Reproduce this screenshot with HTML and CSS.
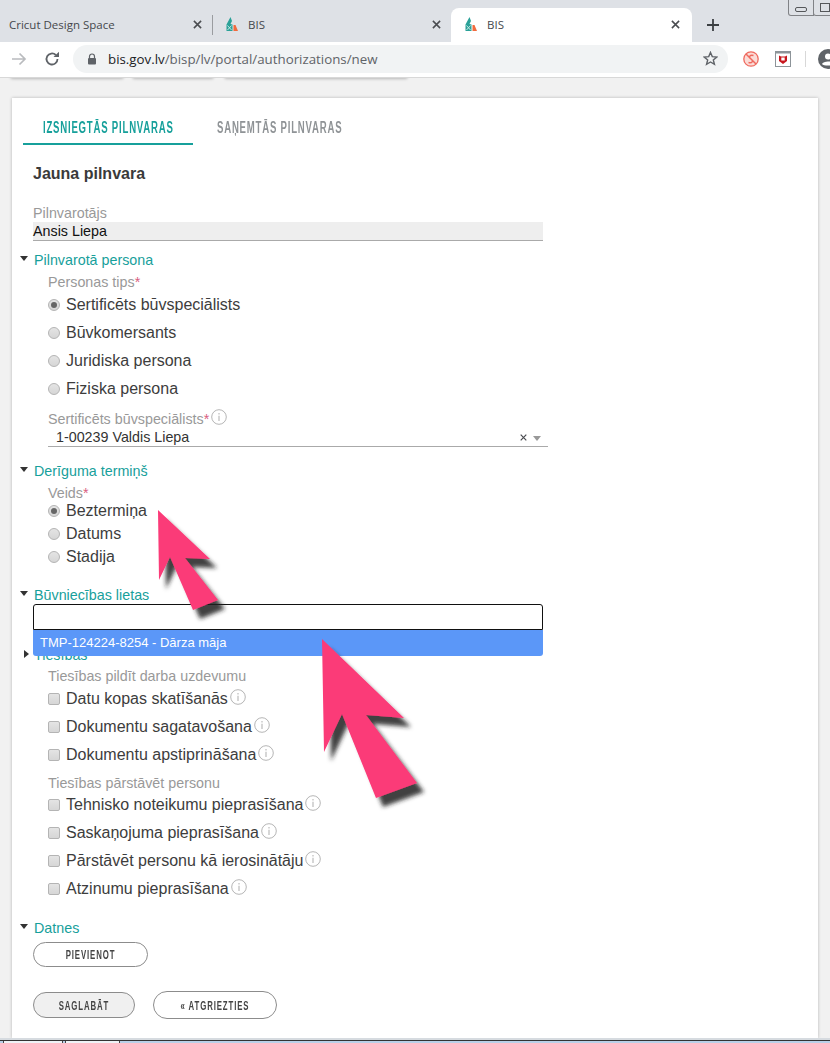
FILE: index.html

```html
<!DOCTYPE html>
<html lang="lv">
<head>
  <meta charset="UTF-8" />
  <title>BIS</title>
  <link rel="stylesheet" href="styles.css">
</head>
<body>
  <svg class="defs" width="0" height="0">
    <symbol id="favicon" viewBox="0 0 12 16">
      <path d="M4.500 1 L6 5 L4.500 8 L6.500 8.500 L6.500 15 L0.500 15 L0.500 8.500 Z" fill="#2aa198"/>
      <path d="M7.500 9 L9.500 9 L12 15 L7.500 15 Z" fill="#f26a3d"/>
      <path d="M1.500 14 L5.500 9.500 M1.500 9.500 L5.500 14" stroke="#d5efec" stroke-width="0.900"/>
    </symbol>
    <symbol id="close" viewBox="0 0 10 10">
      <path d="M1 1 L9 9 M9 1 L1 9" stroke="#4a4c50" stroke-width="1.700"/>
    </symbol>
    <symbol id="info" viewBox="0 0 16 16">
      <circle cx="8" cy="8" r="7.300" fill="#fff" stroke="#b5b5b5"/>
      <path d="M8 4 V5.400 M8 6.800 V12" stroke="#b5b5b5" stroke-width="1.100"/>
    </symbol>
  </svg>

  <div class="tabstrip">
    <div class="tab tab-first">
      <span class="tab-title">Cricut Design Space</span>
      <svg class="tab-close"><use href="#close"/></svg>
    </div>
    <div class="tab-sep"></div>
    <div class="tab tab-second">
      <svg class="favicon"><use href="#favicon"/></svg>
      <span class="tab-title">BIS</span>
      <svg class="tab-close"><use href="#close"/></svg>
    </div>
    <div class="tab tab-active">
      <svg class="favicon"><use href="#favicon"/></svg>
      <span class="tab-title">BIS</span>
      <svg class="tab-close"><use href="#close"/></svg>
    </div>
    <svg class="new-tab" viewBox="0 0 12 12"><path d="M6 0 V12 M0 6 H12" stroke="#3c4043" stroke-width="1.800"/></svg>
  </div>

  <div class="win-controls">
    <div class="win-btn"><span class="win-min"></span></div>
    <div class="win-btn"><span class="win-max"></span></div>
  </div>

  <div class="toolbar">
    <svg class="nav-icon" viewBox="0 0 16 16"><path d="M1 8 H14 M8.500 2.500 L14 8 L8.500 13.500" fill="none" stroke="#b9bbbe" stroke-width="1.700"/></svg>
    <svg class="nav-icon" viewBox="0 0 16 16"><path d="M13.500 8 A5.500 5.500 0 1 1 11.800 4" fill="none" stroke="#5f6368" stroke-width="1.800"/><path d="M9.500 6 H15 V0.800 Z" fill="#5f6368"/></svg>
    <div class="omnibox">
      <svg class="lock" viewBox="0 0 10 12"><path d="M2.500 5 V3.500 A2.500 2.500 0 0 1 7.500 3.500 V5" fill="none" stroke="#5f6368" stroke-width="1.200"/><rect x="1" y="5" width="8" height="6.500" rx="1" fill="#5f6368"/></svg>
      <span class="url"><b>bis.gov.lv</b>/bisp/lv/portal/authorizations/new</span>
      <svg class="star" viewBox="0 0 16 16"><path d="M8 1.500 L9.900 6 L14.700 6.400 L11 9.500 L12.200 14.200 L8 11.700 L3.800 14.200 L5 9.500 L1.300 6.400 L6.100 6 Z" fill="none" stroke="#5f6368" stroke-width="1.500"/></svg>
    </div>
    <svg class="ext ext-s" viewBox="0 0 16 16"><circle cx="8" cy="8" r="7.200" fill="#fbdcd7" stroke="#ef6a5f" stroke-width="1.300"/><path d="M3 3 L13 13 M10.500 4.500 C7 3.500 5 6 8 8 C11 10 9 12.500 5.500 11.500" fill="none" stroke="#ef6a5f" stroke-width="1.500"/></svg>
    <svg class="ext ext-m" viewBox="0 0 16 16"><rect x="0.500" y="0.500" width="15" height="15" fill="#fff" stroke="#8d9499"/><rect x="0.500" y="0.500" width="15" height="2" fill="#8d9499"/><path d="M4 4.500 L6 5.500 H10 L12 4.500 V10 L8 13 L4 10 Z" fill="#c8161d"/><rect x="6.300" y="6.500" width="3.400" height="3" fill="#fff"/></svg>
    <div class="tool-sep"></div>
    <svg class="avatar" viewBox="0 0 20 20"><circle cx="10" cy="10" r="10" fill="#5f6368"/><circle cx="10" cy="7.500" r="3" fill="#fff"/><path d="M4 15 C5 11.500 15 11.500 16 15 C14.500 17 5.500 17 4 15 Z" fill="#fff"/></svg>
  </div>

  <div class="page">
    <div class="behind">
      <span class="behind-pill b1"></span>
      <span class="behind-pill b2"></span>
      <span class="behind-pill b3"></span>
    </div>

    <main class="card">
      <nav class="tabs">
        <a class="tabs-item tabs-on"><span>Izsniegtās pilnvaras</span></a>
        <a class="tabs-item tabs-off"><span>Saņemtās pilnvaras</span></a>
      </nav>

      <h1 class="title">Jauna pilnvara</h1>

      <div class="owner">
        <div class="label">Pilnvarotājs</div>
        <div class="readonly">Ansis Liepa</div>
      </div>

      <section class="sec sec-person">
        <h2 class="sec-head"><i class="tri"></i>Pilnvarotā persona</h2>
        <div class="sec-body">
          <div class="label">Personas tips<em>*</em></div>
          <div class="opt-list opt-wide">
            <label class="opt"><i class="radio on"></i>Sertificēts būvspeciālists</label>
            <label class="opt"><i class="radio"></i>Būvkomersants</label>
            <label class="opt"><i class="radio"></i>Juridiska persona</label>
            <label class="opt"><i class="radio"></i>Fiziska persona</label>
          </div>
          <div class="label label-sel">Sertificēts būvspeciālists<em>*</em><svg class="info"><use href="#info"/></svg></div>
          <div class="select">
            <span>1-00239 Valdis Liepa</span>
            <svg class="sel-x"><use href="#close"/></svg>
            <i class="sel-caret"></i>
          </div>
        </div>
      </section>

      <section class="sec sec-term">
        <h2 class="sec-head"><i class="tri"></i>Derīguma termiņš</h2>
        <div class="sec-body">
          <div class="label">Veids<em>*</em></div>
          <div class="opt-list opt-tight">
            <label class="opt"><i class="radio on"></i>Beztermiņa</label>
            <label class="opt"><i class="radio"></i>Datums</label>
            <label class="opt"><i class="radio"></i>Stadija</label>
          </div>
        </div>
      </section>

      <section class="sec sec-cases">
        <h2 class="sec-head"><i class="tri"></i>Būvniecības lietas</h2>
        <div class="combo">
          <div class="combo-input"></div>
          <div class="combo-list">TMP-124224-8254 - Dārza māja</div>
        </div>
      </section>

      <section class="sec sec-rights">
        <h2 class="sec-head"><i class="tri tri-right"></i>Tiesības</h2>
        <div class="sec-body">
          <div class="label">Tiesības pildīt darba uzdevumu</div>
          <div class="opt-list opt-wide">
            <label class="opt"><i class="check"></i>Datu kopas skatīšanās<svg class="info"><use href="#info"/></svg></label>
            <label class="opt"><i class="check"></i>Dokumentu sagatavošana<svg class="info"><use href="#info"/></svg></label>
            <label class="opt"><i class="check"></i>Dokumentu apstiprināšana<svg class="info"><use href="#info"/></svg></label>
          </div>
          <div class="label label-rep">Tiesības pārstāvēt personu</div>
          <div class="opt-list opt-wide">
            <label class="opt"><i class="check"></i>Tehnisko noteikumu pieprasīšana<svg class="info"><use href="#info"/></svg></label>
            <label class="opt"><i class="check"></i>Saskaņojuma pieprasīšana<svg class="info"><use href="#info"/></svg></label>
            <label class="opt"><i class="check"></i>Pārstāvēt personu kā ierosinātāju<svg class="info"><use href="#info"/></svg></label>
            <label class="opt"><i class="check"></i>Atzinumu pieprasīšana<svg class="info"><use href="#info"/></svg></label>
          </div>
        </div>
      </section>

      <section class="sec sec-files">
        <h2 class="sec-head"><i class="tri"></i>Datnes</h2>
        <button class="btn btn-add" type="button"><span>Pievienot</span></button>
      </section>

      <div class="actions">
        <button class="btn btn-save" type="button"><span>Saglabāt</span></button>
        <button class="btn btn-back" type="button"><span>« Atgriezties</span></button>
      </div>
    </main>
  </div>

  <div class="taskbar">
    <div class="task-track">
      <span class="task"></span>
      <span class="task"></span>
    </div>
  </div>

  <svg class="arrows" viewBox="0 0 830 1043">
    <defs>
      <filter id="arrow-shadow" x="-30%" y="-30%" width="160%" height="160%">
        <feDropShadow dx="7" dy="9" stdDeviation="2" flood-color="#222" flood-opacity="0.85"/>
      </filter>
    </defs>
    <polygon filter="url(#arrow-shadow)" fill="#fb3a78" points="158,510 210,559 185,558 218,600 193,610 170,557 159,580"/>
    <polygon filter="url(#arrow-shadow)" fill="#fb3a78" points="322,639 404,718 366,715 417,783 376,798 342,714 324,752"/>
  </svg>
</body>
</html>
```

FILE: styles.css

```css
* {
  box-sizing: border-box;
}
html, body {
  height: 1043px;
  overflow: hidden;
}
body {
  margin: 0;
  position: relative;
  font-family: 'Liberation Sans', Arial, sans-serif;
  background: #f1f1f1;
  color: #333;
}
.defs {
  position: absolute;
}

/* browser chrome */
.tabstrip {
  height: 42px;
  background: #dee1e6;
  display: flex;
  align-items: flex-end;
  font-family: 'Open Sans', sans-serif;
  font-size: 11.500px;
  color: #45484c;
}
.tab {
  height: 34px;
  padding-bottom: 2px;
  display: flex;
  align-items: center;
  position: relative;
}
.tab-first {
  width: 212px;
  padding-left: 9px;
  padding-right: 10px;
  justify-content: space-between;
}
.tab-sep {
  width: 1px;
  height: 20px;
  margin-bottom: 7px;
  background: #9a9ca0;
}
.tab-second {
  width: 238px;
  padding-left: 13px;
  padding-right: 10px;
}
.tab-active {
  width: 241px;
  padding-left: 14px;
  padding-right: 12px;
  background: #fff;
  border-radius: 8px 8px 0 0;
}
.favicon {
  width: 12px;
  height: 16px;
  margin-right: 10px;
}
.tab-close {
  width: 9px;
  height: 9px;
  margin-left: auto;
}
.new-tab {
  width: 12px;
  height: 12px;
  margin: 0 0 11px 15px;
}
.win-controls {
  position: absolute;
  top: 0;
  left: 788px;
  display: flex;
}
.win-btn {
  width: 26px;
  height: 16px;
  background: #dee1e6;
  border: 1px solid #808286;
  border-top: none;
  border-radius: 0 0 0 3px;
  margin-right: -1px;
  display: flex;
  align-items: center;
  padding-left: 6px;
}
.win-min {
  width: 12px;
  height: 5px;
  margin-top: 4px;
  border: 1px solid #55575a;
  border-radius: 2px;
}
.win-max {
  width: 10px;
  height: 9px;
  border: 1px solid #55575a;
}
.toolbar {
  height: 36px;
  background: #fff;
  border-bottom: 1px solid #d8d8d8;
  display: flex;
  align-items: center;
  padding-left: 11px;
  padding-bottom: 2px;
  position: relative;
  z-index: 1;
}
.nav-icon {
  width: 16px;
  height: 16px;
  margin-right: 17px;
  flex: none;
}
.omnibox {
  width: 655px;
  height: 28px;
  margin-left: -4px;
  background: #f1f3f4;
  border-radius: 14px;
  display: flex;
  align-items: center;
  padding: 0 10px 0 14px;
  font-family: 'Open Sans', sans-serif;
  font-size: 13.300px;
  flex: none;
}
.lock {
  width: 10px;
  height: 12px;
  margin-right: 11px;
}
.url {
  color: #5f6368;
}
.url b {
  font-weight: 400;
  color: #202124;
}
.star {
  width: 15px;
  height: 15px;
  margin-left: auto;
}
.ext {
  width: 16px;
  height: 16px;
  flex: none;
}
.ext-s {
  margin-left: 15px;
}
.ext-m {
  margin-left: 16px;
}
.tool-sep {
  width: 1px;
  height: 16px;
  margin-left: 14px;
  background: #d8d8d8;
  flex: none;
}
.avatar {
  width: 20px;
  height: 20px;
  margin-left: 12px;
  flex: none;
}

/* page */
.page {
  height: 965px;
  position: relative;
}
.behind {
  position: absolute;
  top: -3px;
  left: 0;
  display: flex;
  height: 3px;
}
.behind-pill {
  height: 3px;
  border-radius: 0 0 6px 6px;
  box-shadow: 0 1px 3px rgba(0, 0, 0, 0.25);
}
.b1 {
  width: 114px;
  margin-left: 10px;
}
.b2 {
  width: 82px;
  margin-left: 8px;
}
.b3 {
  width: 184px;
  margin-left: 10px;
}
.card {
  position: absolute;
  top: 20px;
  left: 12px;
  width: 806px;
  height: 940px;
  background: #fff;
  box-shadow: 0 0 3px rgba(0, 0, 0, 0.25);
}
.tabs {
  display: flex;
  margin: 0 0 0 11px;
  padding-top: 18px;
}
.tabs-item {
  height: 29px;
  padding: 3px 20px 0;
  margin-right: 4px;
  font-weight: 700;
  font-size: 16px;
  letter-spacing: 1.300px;
  text-transform: uppercase;
  color: #8f9396;
}
.tabs-item span {
  display: block;
  white-space: nowrap;
  transform: scaleX(0.6);
  transform-origin: left center;
}
.tabs-on {
  width: 170px;
  color: #17a09b;
  border-bottom: 2px solid #17a09b;
}
.tabs-off {
  width: 166px;
}
.title {
  margin: 20px 0 0 21px;
  font-size: 16px;
  line-height: 18px;
  font-weight: 700;
  color: #3a3a3a;
}
.owner {
  margin: 22px 0 0 21px;
  width: 510px;
}
.label {
  font-size: 14.300px;
  line-height: 16px;
  color: #999;
}
.label em {
  font-style: normal;
  color: #d9607f;
}
.readonly {
  height: 19px;
  margin-top: 1px;
  font-size: 14.300px;
  line-height: 19px;
  color: #111;
  background: #eee;
  border-bottom: 1px solid #aaa;
}
.sec-head {
  margin: 0;
  font-size: 14.300px;
  line-height: 16px;
  font-weight: 400;
  color: #17a09b;
  padding-left: 22px;
  position: relative;
}
.tri {
  position: absolute;
  left: 8px;
  top: 4px;
  border-left: 4px solid transparent;
  border-right: 4px solid transparent;
  border-top: 5px solid #333;
}
.tri-right {
  left: 12px;
  top: 3px;
  border-top: 4px solid transparent;
  border-bottom: 4px solid transparent;
  border-left: 5px solid #333;
  border-right: none;
}
.sec-body {
  padding-left: 36px;
}
.sec-person {
  margin-top: 11px;
}
.sec-person .sec-body {
  padding-top: 6px;
}
.opt-list {
  display: flex;
  flex-direction: column;
}
.opt-wide {
  margin-top: 1px;
}
.label-rep + .opt-wide {
  margin-top: 0;
}
.opt {
  display: flex;
  align-items: center;
  font-size: 16px;
  color: #3d3d3d;
}
.opt-wide .opt {
  height: 28px;
}
.opt-tight {
  margin-top: -2px;
}
.opt-tight .opt {
  height: 23px;
}
.radio, .check {
  flex: none;
  width: 12px;
  height: 12px;
  margin-right: 6px;
  background: linear-gradient(#e4e4e4, #d6d6d6);
  border: 1px solid #b4b4b4;
  position: relative;
}
.radio {
  border-radius: 50%;
}
.radio.on::after {
  content: "";
  position: absolute;
  left: 2px;
  top: 2px;
  width: 6px;
  height: 6px;
  border-radius: 50%;
  background: #666;
}
.check {
  border-radius: 2px;
}
.info {
  width: 16px;
  height: 16px;
  margin: -5px 0 0 2px;
  flex: none;
}
.label-sel {
  margin-top: 8px;
  display: flex;
  align-items: center;
}
.select {
  width: 500px;
  height: 20px;
  padding: 1px 8px 0;
  font-size: 14.300px;
  line-height: 16px;
  color: #333;
  border-bottom: 1px solid #aaa;
  display: flex;
  align-items: center;
}
.sel-x {
  width: 7px;
  height: 7px;
  margin-left: auto;
}
.sel-caret {
  margin: 3px -1px 0 6px;
  border-left: 4px solid transparent;
  border-right: 4px solid transparent;
  border-top: 5px solid #999;
}
.sec-term {
  margin-top: 16px;
}
.sec-term .sec-body {
  padding-top: 6px;
}
.sec-cases {
  margin-top: 19px;
}
.combo {
  position: relative;
  margin: 1px 0 0 21px;
  width: 510px;
}
.combo-input {
  height: 26px;
  background: #fff;
  border: 1px solid #111;
  border-radius: 3px 3px 0 0;
}
.combo-list {
  position: absolute;
  top: 26px;
  left: 0;
  right: 0;
  z-index: 2;
  height: 26px;
  padding: 0 7px;
  font-size: 13px;
  line-height: 26px;
  color: #fff;
  background: #5b97f8;
  border-radius: 0 0 3px 3px;
}
.sec-rights {
  margin-top: 17px;
}
.sec-rights .sec-body {
  padding-top: 5px;
}
.label-rep {
  margin-top: 6px;
}
.sec-files {
  margin-top: 17px;
}
.btn {
  display: block;
  font-family: 'Liberation Sans', sans-serif;
  font-weight: 700;
  font-size: 13px;
  letter-spacing: 1.500px;
  text-transform: uppercase;
  color: #444;
  background: #fff;
  border: 1px solid #8c8c8c;
  padding: 0;
}
.btn span {
  display: block;
  white-space: nowrap;
  transform: scaleX(0.6);
}
.btn-add {
  width: 115px;
  height: 25px;
  border-radius: 13px;
  margin: 6px 0 0 21px;
}
.actions {
  display: flex;
  align-items: center;
  margin: 24px 0 0 21px;
  gap: 18px;
}
.btn-save {
  width: 102px;
  height: 26px;
  border-radius: 13px;
  background: #f0f0f0;
}
.btn-back {
  width: 124px;
  height: 28px;
  border-radius: 14px;
}
.taskbar {
  position: absolute;
  left: 0;
  right: 0;
  bottom: 0;
  height: 5px;
  padding-top: 2px;
  background: #d6dbe0;
}
.task-track {
  height: 3px;
  padding-left: 3px;
  background: #b9d0e8;
  border-top: 1px solid #333;
  display: flex;
  gap: 2px;
}
.task {
  width: 60px;
  height: 2px;
  background: #eef2f6;
  border-left: 1px solid #444;
  border-right: 1px solid #444;
}
.task + .task {
  width: 55px;
}
.arrows {
  position: absolute;
  top: 0;
  left: 0;
  width: 830px;
  height: 1043px;
  z-index: 5;
  pointer-events: none;
}
```
